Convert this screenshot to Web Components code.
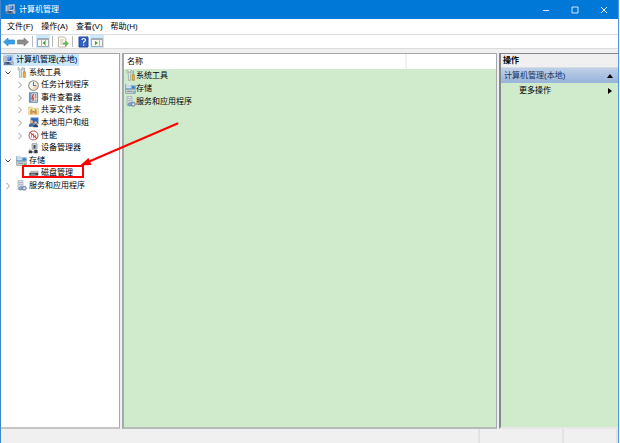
<!DOCTYPE html>
<html lang="zh-CN">
<head>
<meta charset="utf-8">
<title>计算机管理</title>
<style>
html,body{height:100%;margin:0}
body{font:8px/12px "Liberation Sans","Noto Sans CJK SC",sans-serif;color:#000;background:#e8f3fa;overflow:hidden}
</style>
</head>
<body>
<mmc-window></mmc-window>
<script>
const svg = (vb, body) => `<svg viewBox="0 0 ${vb} ${vb}" aria-hidden="true">${body}</svg>`;
const ICONS = {
  computer: svg(16, '<path d="M1 2h3v9H1z" fill="#c3ccd5" stroke="#8c9aa8" stroke-width=".7"/><path d="M5 1l9-.500v9.500l-9 1z" fill="#e6eff7" stroke="#8796a8" stroke-width=".8"/><path d="M6.500 2.500l6-.4v6l-6 .8z" fill="#2257bd"/><path d="M8 3l3 0-2 4h-2z" fill="#7fa5e6"/><path d="M11 10h4v4h-4z" fill="#b9c4cf" stroke="#7c8792" stroke-width=".7"/><path d="M2 10h8l3 4.500H1z" fill="#6d7b90"/><path d="M5 10h4v3H5z" fill="#2b4f91"/>'),
  tools: svg(16, '<path d="M3 0v4l2 2v9h3V6l2-2V0L8 2v2H5V2z" fill="#e3e6e8" stroke="#858b90" stroke-width=".8"/><path d="M12 1v7" stroke="#a5a5a5" stroke-width="2"/><path d="M10.500 7h3v8h-3z" fill="#efb44a" stroke="#b37a23"/>'),
  clock: svg(16, '<circle cx="8" cy="8" r="7" fill="#f4f3ee" stroke="#8d8882" stroke-width="1.500"/><path d="M8 8h6a6 6 0 0 1-6 6z" fill="#efd3ae"/><path d="M8 3v5h4" fill="none" stroke="#56789f" stroke-width="1.500"/>'),
  event: svg(16, '<path d="M2 1h12v14H2z" fill="#7198c7" stroke="#50749f"/><path d="M5 2h8v12H5z" fill="#d6e4f1"/><path d="M8 3L6 9h2l-1 4" fill="none" stroke="#c84a43" stroke-width="2"/><path d="M11 3v6M11 11v2" stroke="#d99927" stroke-width="2"/>'),
  folder: svg(16, '<path d="M1 3h5l2 2h7v9H1z" fill="#f7e3a8" stroke="#dfc47c"/><path d="M3 8h4v5H3zM9 8h4v5H9z" fill="#d8954e"/><path d="M4 6h2v2H4zM10 6h2v2h-2z" fill="#5f9b69"/><path d="M7 10h2" stroke="#517da1" stroke-width="2"/>'),
  users: svg(16, '<path d="M4 1h11v9H4z" fill="#2a66c0" stroke="#9badc1"/><circle cx="5" cy="7" r="2.500" fill="#e0b48d"/><path d="M1 14q0-5 4-5t4 5z" fill="#456c9d"/><circle cx="11" cy="8" r="2" fill="#dfb28c"/><path d="M8 15q0-5 3-5t4 5z" fill="#35415c"/>'),
  perf: svg(16, '<circle cx="8" cy="8" r="6.500" fill="#fff5f3" stroke="#a86461" stroke-width="1.500"/><path d="M5 11V6M8 12V5M11 11V7" fill="none" stroke="#8a8a8a" stroke-width="1.200"/><path d="M3 3l10 10" stroke="#b94444" stroke-width="1.500"/>'),
  device: svg(16, '<path d="M6 1h7v8H6z" fill="#dce1e6" stroke="#78828c"/><path d="M8 3h3v5H8z" fill="#3c4652"/><path d="M1 11h5v4H1zM9 10h5v5H9z" fill="#343c46"/><path d="M3 9v2M6 13h3" stroke="#8a939c" stroke-width="2"/>'),
  storage: svg(16, '<path d="M1 2h6l1 2h7v5H1z" fill="#8dbde5" stroke="#5b91bc"/><path d="M2 1h6v6H2z" fill="#edf5fa"/><path d="M3 3h4M3 5h4" stroke="#9eb3c4"/><path d="M1 9h12l2 2v4H1z" fill="#d4dce2" stroke="#758490"/><path d="M3 12h8" stroke="#526271"/><path d="M12 13h2" stroke="#2cab58" stroke-width="2"/><path d="M10 5h4v3h-4z" fill="#2b7bc0"/>'),
  disk: svg(16, '<path d="M4 4h11l1 3H2z" fill="#b5babf"/><path d="M2 7h13v4H2z" fill="#3d4349"/><path d="M1 11h9v3H1z" fill="#747b82"/><path d="M4 9h7" stroke="#dce1e5"/>'),
  services: svg(16, '<path d="M3 1h7v13H3z" fill="#e8eef3" stroke="#8b98a5"/><path d="M4 4h5M4 7h5" stroke="#778999"/><circle cx="7" cy="12" r="2.500" fill="#8ab0d1" stroke="#587e9f"/><circle cx="12" cy="12" r="3" fill="#a5afd4" stroke="#637099"/><circle cx="12" cy="12" r="1" fill="#fff"/>'),
  back: svg(12, '<path d="M.5 6L5 2v2h6.500v4H5v2z" fill="#38a0e7" stroke="#2381c7" stroke-width=".6"/>'),
  forward: svg(12, '<path d="M11.500 6L7 2v2H.5v4H7v2z" fill="#8c8c8c" stroke="#717171" stroke-width=".6"/>'),
  tree: svg(12, '<path d="M.5 2.500h11v8H.5z" fill="#f6f6f2" stroke="#a3a9ad"/><path d="M1 2h10v2H1z" fill="#a4adb4"/><path d="M4.500 4v7M8.500 4v7" stroke="#b2b9be"/><path d="M8 5v4L5.500 7z" fill="#439b42"/>'),
  action: svg(12, '<path d="M.5 2.500h11v8H.5z" fill="#f6f6f2" stroke="#a3a9ad"/><path d="M1 2h10v2H1z" fill="#a4adb4"/><path d="M8.500 4v7" stroke="#b2b9be"/><path d="M4 5v4l3-2z" fill="#439b42"/>'),
  export: svg(12, '<path d="M1.500 1h6L9 3v8H1.500z" fill="#fffef1" stroke="#a9a99c" stroke-width=".8"/><path d="M3 4h4M3 6h3M3 8h4" stroke="#a9a99c" stroke-width=".7"/><path d="M6 6.500h2V4.500l4 3-4 3v-2H6z" fill="#62b752"/>'),
  help: svg(12, '<path d="M2 1h9v10H2z" fill="#315fc2" stroke="#234a98"/><path d="M5 4q0-1.500 1.700-1.500T8.500 4q0 1-1.800 2v1.300M6.700 8.500v1.200" fill="none" stroke="#fff" stroke-width="1.200"/>'),
  min: svg(8, '<path d="M1 4.500h6" stroke="#fff" stroke-width=".8"/>'),
  max: svg(8, '<path d="M1 1h6v6H1z" fill="none" stroke="#fff" stroke-width=".8"/>'),
  close: svg(8, '<path d="M1 1l6 6M7 1L1 7" stroke="#fff" stroke-width=".9"/>'),
  open: svg(8, '<path d="M1.500 2.500L4 5l2.500-2.500" fill="none" stroke="#444"/>'),
  shut: svg(8, '<path d="M2.500 1L5.500 4 2.500 7" fill="none" stroke="#999"/>'),
  up: svg(8, '<path d="M1 6l3-4 3 4z"/>'),
  right: svg(8, '<path d="M2 1l4 3-4 3z"/>')
};
const define = (name, render) => customElements.define(name, class extends HTMLElement {
  connectedCallback() {
    if (!this.shadowRoot) this.attachShadow({mode: 'open'}).innerHTML = render(this);
  }
});
const reset = 'button{font:inherit;color:inherit;background:none;border:0;padding:0;margin:0;white-space:nowrap;text-align:left}';

define('mmc-icon', el => `<style>:host{display:block;width:var(--icon,11px);height:var(--icon,11px);flex:none}svg{display:block;width:100%;height:100%}</style>${ICONS[el.getAttribute('name')]}`);

define('title-bar', () => `<style>${reset}
:host{display:flex;align-items:center;height:19px;background:#0078d7;color:#fff;padding-left:4px}
span{flex:1;padding-left:3px}
button{width:29px;height:19px;display:grid;place-items:center;--icon:8px}
nav{display:flex}</style>
<mmc-icon name="computer"></mmc-icon><span>计算机管理</span>
<nav><button aria-label="最小化"><mmc-icon name="min"></mmc-icon></button><button aria-label="最大化"><mmc-icon name="max"></mmc-icon></button><button aria-label="关闭"><mmc-icon name="close"></mmc-icon></button></nav>`);

define('menu-bar', () => `<style>${reset}
:host{display:flex;gap:8px;align-items:center;height:15px;padding-left:6px;background:#fff;border-bottom:1px solid #dcdcdc}</style>
<button>文件(F)</button><button>操作(A)</button><button>查看(V)</button><button>帮助(H)</button>`);

define('tool-bar', () => `<style>${reset}
:host{display:flex;align-items:center;height:13px;padding-left:1px;background:#fff;border-bottom:1px solid #dcdcdc;--icon:12px}
button{width:14px;height:13px;display:grid;place-items:center}
.on{background:#cce8ff}
i{width:1px;height:11px;background:#bbb;margin:0 3px 0 2px}</style>
<button aria-label="后退"><mmc-icon name="back"></mmc-icon></button><button aria-label="前进"><mmc-icon name="forward"></mmc-icon></button><i></i><button class="on" aria-label="显示控制台树"><mmc-icon name="tree"></mmc-icon></button><i></i><button aria-label="导出列表"><mmc-icon name="export"></mmc-icon></button><i></i><button aria-label="帮助"><mmc-icon name="help"></mmc-icon></button><button class="on" aria-label="显示操作窗格"><mmc-icon name="action"></mmc-icon></button>`);

define('tree-item', el => {
  const s = el.getAttribute('state');
  return `<style>:host{display:flex;align-items:center;min-height:0;white-space:nowrap;padding-left:2px}
:host([level="1"]){padding-left:3px}:host([level="2"]){padding-left:15px}
div{display:flex;align-items:center;gap:2px;padding-right:2px}
:host([selected]) div{background:#cce8ff}
.t{width:8px;margin-right:4px;--icon:8px}</style>
${el.getAttribute('level') === '0' ? '' : `<span class="t">${s ? `<mmc-icon name="${s}"></mmc-icon>` : ''}</span>`}<div><mmc-icon name="${el.getAttribute('icon')}"></mmc-icon><slot></slot></div>`;
});

define('console-tree', () => `<style>
:host{display:block;background:#fff;border:1px solid #a5a9ad;border-left:0;border-bottom:2px solid #c5c5c5;position:relative}
section{display:grid;grid-template-rows:repeat(11,1fr);height:138px}
.mark{position:absolute;left:21px;top:111px;width:58px;height:9px;border:2px solid #f00}
svg{position:absolute;left:78px;top:67px;width:101px;height:48px;z-index:2;pointer-events:none}</style>
<section role="tree">
<tree-item level="0" icon="computer" selected>计算机管理(本地)</tree-item>
<tree-item level="1" icon="tools" state="open">系统工具</tree-item>
<tree-item level="2" icon="clock" state="shut">任务计划程序</tree-item>
<tree-item level="2" icon="event" state="shut">事件查看器</tree-item>
<tree-item level="2" icon="folder" state="shut">共享文件夹</tree-item>
<tree-item level="2" icon="users" state="shut">本地用户和组</tree-item>
<tree-item level="2" icon="perf" state="shut">性能</tree-item>
<tree-item level="2" icon="device">设备管理器</tree-item>
<tree-item level="1" icon="storage" state="open">存储</tree-item>
<tree-item level="2" icon="disk">磁盘管理</tree-item>
<tree-item level="1" icon="services" state="shut">服务和应用程序</tree-item>
</section>
<div class="mark"></div>
<svg viewBox="0 0 101 48" aria-hidden="true"><path d="M98.500 2.500L9 41" stroke="#f00" stroke-width="2" stroke-linecap="round"/><path d="M1 44.500l8.500-7.500 3 7z" fill="#f00"/></svg>`);

define('result-list', () => `<style>
:host{display:block;background:#d0ebcc;border:1px solid #a5a9ad;border-left-width:2px;border-bottom:2px solid #b5bbb5}
table{border-collapse:collapse;width:100%;table-layout:fixed}
th{font-weight:normal;text-align:left;height:15px;padding:0 0 0 3px;background:#fff;border-right:2px solid #f2f2f2}
th:last-child{width:86px;border-right:0}
td{padding:0 0 0 1px;height:13px}
div{display:flex;align-items:center;height:13px}</style>
<table><thead><tr><th>名称</th><th></th></tr></thead><tbody>
<tr><td><div><mmc-icon name="tools"></mmc-icon>系统工具</div></td><td></td></tr>
<tr><td><div><mmc-icon name="storage"></mmc-icon>存储</div></td><td></td></tr>
<tr><td><div><mmc-icon name="services"></mmc-icon>服务和应用程序</div></td><td></td></tr></tbody></table>`);

define('action-pane', () => `<style>${reset}
:host{display:block;background:#d0ebcc;border-top:1px solid #828790;border-left:2px solid #828790;border-bottom:2px solid #e8e8e8;--icon:8px}
h2{font:bold 8px/13px "Liberation Sans","Noto Sans CJK SC",sans-serif;margin:0;padding-left:2px;background:#f0f0f0;border-bottom:1px solid #d5dce4}
button{display:flex;align-items:center;justify-content:space-between;width:100%;height:15px;padding:0 4px 0 3px}
.group{background:linear-gradient(#bfd0e8,#98b3da);color:#17335d}
.item{padding-left:18px}</style>
<h2>操作</h2><button class="group">计算机管理(本地)<mmc-icon name="up"></mmc-icon></button><button class="item">更多操作<mmc-icon name="right"></mmc-icon></button>`);

define('status-bar', () => `<style>:host{display:flex;height:14px;background:#f0f0f0}
span{border-right:2px solid #e3e3e3}.main{flex:1}.mid{width:82px}.end{width:52px}</style><span class="main"></span><span class="mid"></span><span class="end"></span>`);

define('mmc-window', () => `<style>
:host{display:flex;flex-direction:column;box-sizing:border-box;height:100%;margin-right:1px;background:#f0f0f0;border-left:1px solid #3f87c9;border-right:1px solid #4a9be0}
main{flex:1;min-height:0;display:grid;grid-template-columns:119px minmax(0,1fr) 119px;gap:2px;padding-top:4px}
console-tree{z-index:1}</style>
<title-bar></title-bar><menu-bar></menu-bar><tool-bar></tool-bar>
<main><console-tree></console-tree><result-list></result-list><action-pane></action-pane></main>
<status-bar></status-bar>`);
</script>
</body>
</html>
